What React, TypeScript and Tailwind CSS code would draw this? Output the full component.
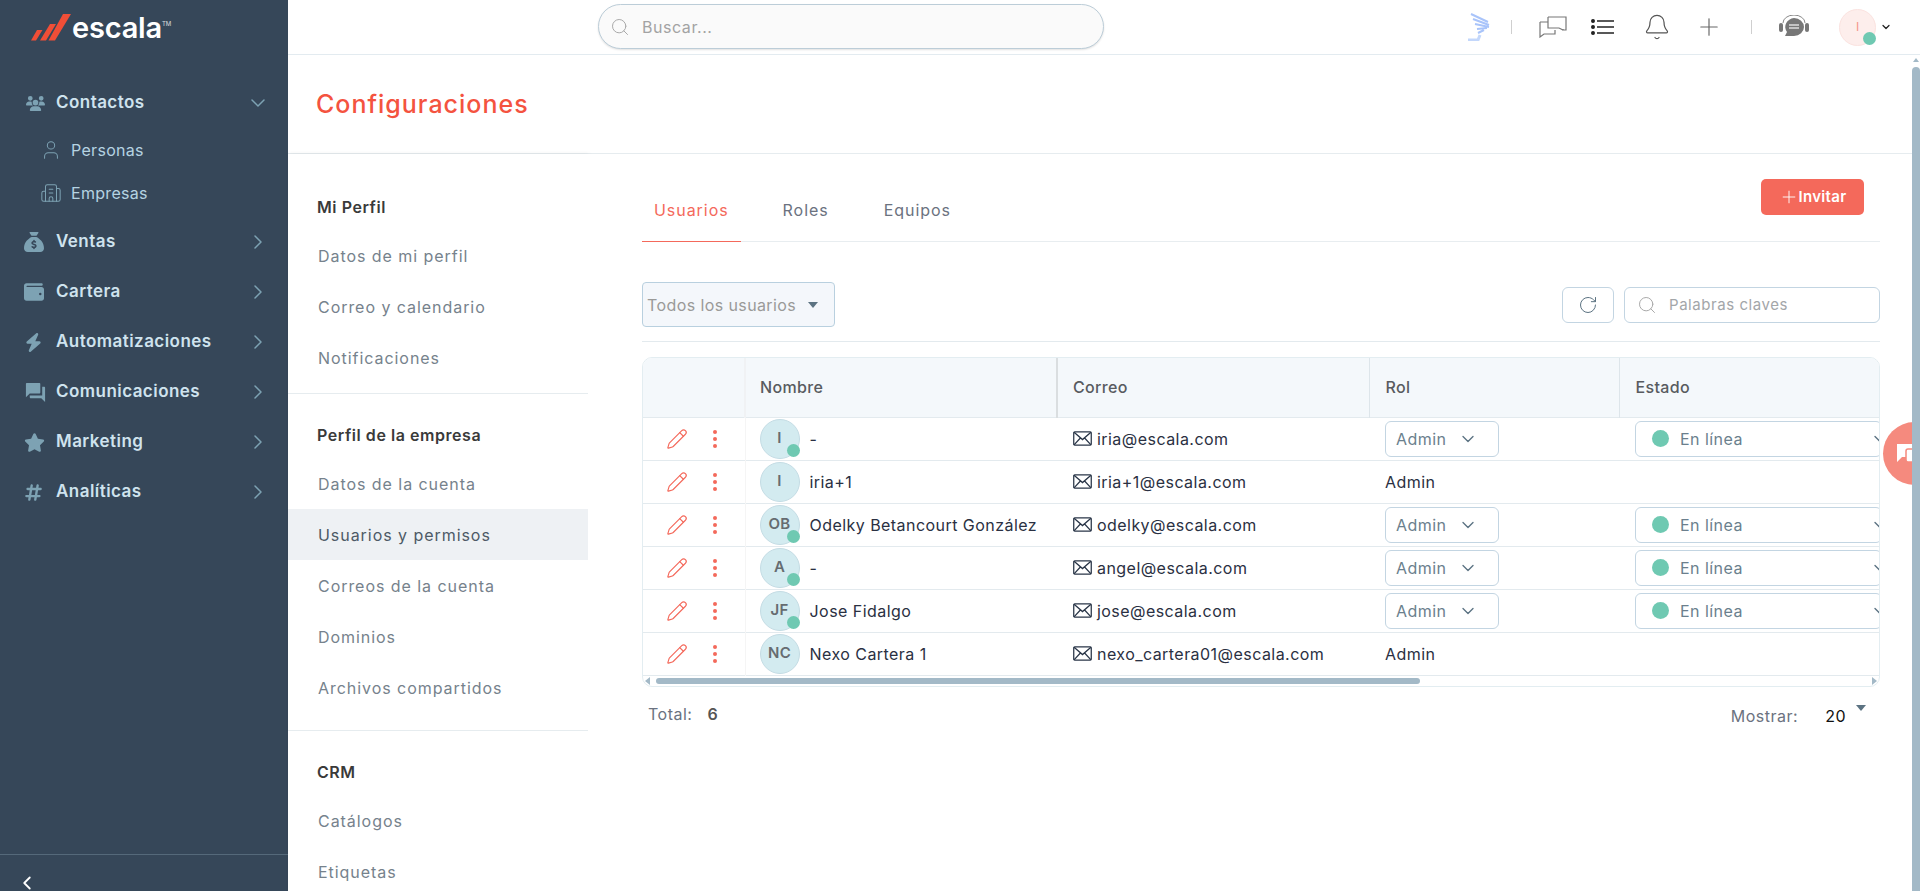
import { ChevronDown, ChevronLeft, ChevronRight, Plus, Search, RotateCw, Pencil, User, Building2, Bell } from "lucide-react";
import { FaBolt, FaHashtag, FaStar, FaUsers, FaWallet, FaSackDollar } from "react-icons/fa6";
import { MdForum } from "react-icons/md";

const nav = [
  { label: "Ventas", icon: <FaSackDollar className="w-[20px] h-[20px]" /> },
  { label: "Cartera", icon: <FaWallet className="w-[20px] h-[20px]" /> },
  { label: "Automatizaciones", icon: <FaBolt className="w-[19px] h-[19px]" /> },
  { label: "Comunicaciones", icon: <MdForum className="w-[23px] h-[23px]" /> },
  { label: "Marketing", icon: <FaStar className="w-[21px] h-[21px]" /> },
  { label: "Analíticas", icon: <FaHashtag className="w-[19px] h-[19px]" /> },
];

const settings = [
  { title: "Mi Perfil", items: ["Datos de mi perfil", "Correo y calendario", "Notificaciones"] },
  {
    title: "Perfil de la empresa",
    items: ["Datos de la cuenta", "Usuarios y permisos", "Correos de la cuenta", "Dominios", "Archivos compartidos"],
  },
  { title: "CRM", items: ["Catálogos", "Etiquetas"] },
];

const users = [
  { initials: "I", name: "-", mail: "iria@escala.com", online: true },
  { initials: "I", name: "iria+1", mail: "iria+1@escala.com", online: false },
  { initials: "OB", name: "Odelky Betancourt González", mail: "odelky@escala.com", online: true },
  { initials: "A", name: "-", mail: "angel@escala.com", online: true },
  { initials: "JF", name: "Jose Fidalgo", mail: "jose@escala.com", online: true },
  { initials: "NC", name: "Nexo Cartera 1", mail: "nexo_cartera01@escala.com", online: false },
];

function Logo() {
  return (
    <div className="flex items-center h-[54px] pl-[30px]">
      <svg width="41" height="27" viewBox="0 0 41 27" className="fill-[#f04e37]">
        <path d="M7 16h5.500L6 26.500H1z" />
        <path d="M20 10h6L16 26.500h-6z" />
        <path d="M33 0h8L25 26.500h-6.500z" />
      </svg>
      <span className="ml-[1px] text-[29px] leading-none font-semibold text-white tracking-[-0.2px]">escala</span>
      <span className="text-[6px] text-white/80 self-start mt-[19px]">TM</span>
    </div>
  );
}

function Sidebar() {
  return (
    <aside className="w-[288px] shrink-0 h-full bg-[#364759] flex flex-col">
      <Logo />
      <nav className="mt-[24px] flex-1">
        <div className="flex items-center h-[50px] pl-[26px] pr-[18px] text-[#cfe3ee]">
          <span className="w-[30px] text-[#7da2b3] flex"><FaUsers className="w-[19px] h-[19px]" /></span>
          <span className="text-[17px] font-semibold tracking-[0.45px]">Contactos</span>
          <ChevronDown className="ml-auto w-[24px] h-[24px] text-[#7da2b3]" strokeWidth={1.5} />
        </div>
        <div className="flex items-center h-[43px] pl-[40px] text-[#b5d3e2] text-[16px] tracking-[0.3px]">
          <User className="w-[22px] h-[22px] mr-[9px] text-[#7da2b3]" strokeWidth={1.1} />
          Personas
        </div>
        <div className="flex items-center h-[43px] pl-[40px] text-[#b5d3e2] text-[16px] tracking-[0.3px] mb-[3px]">
          <Building2 className="w-[22px] h-[22px] mr-[9px] text-[#7da2b3]" strokeWidth={1.1} />
          Empresas
        </div>
        {nav.map((n) => (
          <div key={n.label} className="flex items-center h-[50px] pl-[24px] pr-[18px] text-[#cfe3ee]">
            <span className="w-[32px] text-[#7da2b3] flex">{n.icon}</span>
            <span className="text-[17px] font-semibold tracking-[0.45px]">{n.label}</span>
            <ChevronRight className="ml-auto w-[24px] h-[24px] text-[#7da2b3]" strokeWidth={1.5} />
          </div>
        ))}
      </nav>
      <div className="h-[37px] border-t border-[#55697a] pl-[16px] pt-[15px] overflow-hidden">
        <ChevronLeft className="w-[22px] h-[26px] text-white" strokeWidth={2} />
      </div>
    </aside>
  );
}

function TopBar() {
  return (
    <header className="h-[55px] shrink-0 bg-white border-b border-[#e3ebf0] flex items-center pl-[310px] pr-[28px]">
      <div className="w-[506px] h-[45px] rounded-full border border-[#bccdd8] bg-[#fafafa] shadow-[0_1px_2px_rgba(0,0,0,0.12)] flex items-center pl-[11px] mt-[-1px]">
        <Search className="w-[20px] h-[20px] text-[#a9a9a9]" strokeWidth={1.2} />
        <span className="ml-[12px] text-[16px] text-[#a3a3a3] tracking-[0.55px]">Buscar...</span>
      </div>
      <div className="ml-auto flex items-center">
        <svg width="24" height="28" viewBox="0 0 24 28" className="fill-none stroke-[#a9c4fa]" strokeWidth="2">
          <path d="M4 1l17 8M6 6l16 6M8 11l14 3M10 16l10-1M11 20l6-3" />
          <path d="M1 27h10l2-5" className="stroke-[#c3d7fb]" strokeWidth="3" />
        </svg>
        <span className="ml-[20px] w-px h-[14px] bg-[#cfcfcf]" />
        <svg width="28" height="22" viewBox="0 0 28 22" className="ml-[27px] fill-none stroke-[#777]" strokeWidth="1.2">
          <path d="M9 1h18v13h-3v-1" />
          <path d="M9 1v11h11l4 2" />
          <path d="M1 6h8M1 6v15l4-3h11v-4" />
        </svg>
        <svg width="24" height="16" viewBox="0 0 24 16" className="ml-[24px] stroke-[#222] fill-[#222]" strokeWidth="1.6">
          <circle cx="2" cy="2" r="1.2" />
          <circle cx="2" cy="8" r="1.2" />
          <circle cx="2" cy="14" r="1.2" />
          <path d="M6 2h17M6 8h17M6 14h17" />
        </svg>
        <Bell className="ml-[28px] w-[28px] h-[28px] text-[#555]" strokeWidth={1.05} />
        <Plus className="ml-[24px] w-[28px] h-[28px] text-[#666]" strokeWidth={1} />
        <span className="ml-[28px] w-px h-[14px] bg-[#cfcfcf]" />
        <svg width="30" height="24" viewBox="0 0 30 24" className="ml-[27px]">
          <rect x="0" y="8" width="4" height="9" rx="2" className="fill-[#777]" />
          <rect x="26" y="8" width="4" height="9" rx="2" className="fill-[#777]" />
          <path d="M4 8a11 8 0 0 1 22 0" fill="none" stroke="#888" strokeWidth="1" />
          <path d="M15 3a10 9 0 0 1 0 18H6l2-4a10 9 0 0 1 7-14z" className="fill-[#777]" />
          <path d="M10 10h10M10 13h10" stroke="#ddd" strokeWidth="1.5" />
        </svg>
        <div className="relative ml-[30px] w-[37px] h-[37px] rounded-full bg-[#fdeeec] border border-[#fbe3e0] flex items-center justify-center text-[#f5928a] text-[12px]">
          I
          <span className="absolute right-[-1px] bottom-0 w-[13px] h-[13px] rounded-full bg-[#6fc9b2]" />
        </div>
        <ChevronDown className="ml-[4px] w-[12px] h-[12px] text-[#222]" strokeWidth={2.5} />
      </div>
    </header>
  );
}

function SettingsMenu() {
  return (
    <div className="w-[300px] shrink-0 h-full bg-white shadow-[1px_0_4px_rgba(0,0,0,0.08)] overflow-hidden pt-[29px] text-[16px] tracking-[0.95px]">
      {settings.map((s, i) => (
        <div
          key={s.title}
          className={i === 0 ? "border-b border-[#e6ecef] pb-[10px] mb-[17px]" : i === 1 ? "border-b border-[#e6ecef] pb-[17px] mb-[17px]" : ""}
        >
          <div className="h-[47px] flex items-center pl-[29px] font-semibold text-[#3a3a3a] tracking-[0.55px]">{s.title}</div>
          {s.items.map((item) => (
            <div
              key={item}
              className={
                item === "Usuarios y permisos"
                  ? "h-[51px] flex items-center pl-[30px] text-[#4d5a66] bg-[#eef1f4]"
                  : "h-[51px] flex items-center pl-[30px] text-[#76828c]"
              }
            >
              {item}
            </div>
          ))}
        </div>
      ))}
    </div>
  );
}

function MailIcon() {
  return (
    <svg width="19" height="15" viewBox="0 0 18 14" className="fill-none stroke-[#2a3648] shrink-0" strokeWidth="1.2">
      <rect x="0.7" y="0.7" width="16.6" height="12.6" rx="1" />
      <path d="M1 1l8 7 8-7M1 13l6-6.500M17 13l-6-6.500" />
    </svg>
  );
}

function UserRow({ u }: { u: (typeof users)[number] }) {
  return (
    <tr className="h-[43px] border-b border-[#e3eaee] text-[16px] text-[#2a3042] tracking-[0.45px]">
      <td className="p-0 border-r border-[#f5f5f5]">
        <div className="flex items-center pl-[23px]">
          <Pencil className="w-[22px] h-[22px] text-[#f4695b]" strokeWidth={1.25} />
          <svg width="4" height="20" viewBox="0 0 4 20" className="ml-[25px] fill-[#f4695b]">
            <circle cx="2" cy="3" r="2" />
            <circle cx="2" cy="10" r="2" />
            <circle cx="2" cy="17" r="2" />
          </svg>
        </div>
      </td>
      <td className="p-0 pl-[14px]">
        <div className="flex items-center">
          <div className="relative w-[40px] h-[40px] rounded-full bg-[#d3ebf0] border border-[#c4dce4] flex items-center justify-center text-[15px] font-semibold text-[#666c70] tracking-[0.3px]">
            {u.initials}
            {u.online && <span className="absolute right-[-1px] bottom-[1px] w-[13px] h-[13px] rounded-full bg-[#6fc9b2]" />}
          </div>
          <span className="ml-[10px]">{u.name}</span>
        </div>
      </td>
      <td className="p-0 pl-[16px]">
        <div className="flex items-center">
          <MailIcon />
          <span className="ml-[5px]">{u.mail}</span>
        </div>
      </td>
      <td className="p-0 pl-[16px]">
        {u.online ? (
          <div className="w-[114px] h-[36px] rounded-[6px] border border-[#c3d5e2] flex items-center pl-[10px] text-[#6b7f8d]">
            Admin
            <ChevronDown className="ml-[12px] w-[20px] h-[20px] text-[#5b7282]" strokeWidth={1.6} />
          </div>
        ) : (
          "Admin"
        )}
      </td>
      <td className="p-0 pl-[16px]">
        {u.online && (
          <div className="w-[247px] h-[36px] rounded-[6px] border border-[#c3d5e2] flex items-center pl-[16px] text-[#6b7f8d]">
            <span className="w-[17px] h-[17px] rounded-full bg-[#6fc9b2] mr-[11px]" />
            En línea
            <ChevronDown className="ml-auto mr-[-9px] w-[20px] h-[20px] text-[#5b7282]" strokeWidth={1.6} />
          </div>
        )}
      </td>
    </tr>
  );
}

function UsersPanel() {
  return (
    <div className="flex-1 min-w-0 h-full bg-white pl-[54px] pr-[40px] pt-[21px] overflow-hidden">
      <div className="flex items-start h-[67px] border-b border-[#e8edf0] text-[16px] tracking-[0.95px]">
        <div className="h-[52px] mt-[15px] pt-[8px] px-[12px] text-[#f4695b] border-b border-[#f4695b]">Usuarios</div>
        <div className="h-[52px] mt-[15px] pt-[8px] ml-[30px] px-[12px] text-[#6b7280]">Roles</div>
        <div className="h-[52px] mt-[15px] pt-[8px] ml-[31px] px-[12px] text-[#6b7280]">Equipos</div>
        <button className="ml-auto mr-[16px] mt-[4px] w-[103px] h-[36px] rounded-[5px] bg-[#f4695b] text-white text-[15px] font-semibold flex items-center justify-center tracking-[0.3px]">
          <Plus className="w-[20px] h-[20px]" strokeWidth={1.1} />
          Invitar
        </button>
      </div>
      <div className="h-[99px] flex items-start">
        <div className="mt-[40px] w-[193px] h-[45px] rounded-[4px] border border-[#b9d0df] bg-[#f4f7fb] flex items-center pl-[4px] text-[16px] text-[#9a9a98] tracking-[0.4px]">
          Todos los usuarios
          <span className="ml-[12px] w-0 h-0 border-x-[5px] border-x-transparent border-t-[6px] border-t-[#5c7382]" />
        </div>
        <button className="ml-auto mt-[45px] w-[52px] h-[36px] rounded-[6px] border border-[#c3d5e2] flex items-center justify-center">
          <RotateCw className="w-[20px] h-[20px] text-[#5c7382]" strokeWidth={1.2} />
        </button>
        <div className="ml-[10px] mt-[45px] w-[256px] h-[36px] rounded-[6px] border border-[#c3d5e2] flex items-center pl-[12px] text-[15px] text-[#a3a6a9] tracking-[0.55px]">
          <Search className="w-[20px] h-[20px] text-[#a9a9a9]" strokeWidth={1.2} />
          <span className="ml-[12px]">Palabras claves</span>
        </div>
      </div>
      <div className="border-t border-[#e3eaee] pt-[15px]">
        <div className="rounded-[10px] border border-[#e3edf1] overflow-hidden">
          <table className="table-fixed w-[1300px] border-collapse text-left">
            <colgroup>
              <col className="w-[102px]" />
              <col className="w-[312px]" />
              <col className="w-[312px]" />
              <col className="w-[250px]" />
              <col className="w-[324px]" />
            </colgroup>
            <thead>
              <tr className="h-[59px] bg-[#f4f8fb] border-b border-[#e3eaee] text-[16px] text-[#585b5f] tracking-[0.35px]">
                <th className="p-0 font-medium border-r-2 border-[#f0f2f4]" />
                <th className="p-0 pl-[14px] font-medium border-r-2 border-[#dadee0]">Nombre</th>
                <th className="p-0 pl-[15px] font-medium border-r border-[#dde5ea]">Correo</th>
                <th className="p-0 pl-[16px] font-medium border-r border-[#dde5ea]">Rol</th>
                <th className="p-0 pl-[16px] font-medium">Estado</th>
              </tr>
            </thead>
            <tbody>
              {users.map((u) => (
                <UserRow key={u.mail} u={u} />
              ))}
            </tbody>
          </table>
          <div className="h-[10px] flex items-center px-[2px] gap-[3px]">
            <span className="w-0 h-0 border-y-[4px] border-y-transparent border-r-[5px] border-r-[#a3b9c7]" />
            <div className="ml-[3px] w-[764px] h-[6px] rounded-full bg-[#a3b9c7]" />
            <span className="ml-auto w-0 h-0 border-y-[4px] border-y-transparent border-l-[5px] border-l-[#a3b9c7]" />
          </div>
        </div>
      </div>
      <div className="flex items-start pt-[15px] text-[16px] tracking-[0.5px]">
        <span className="ml-[6px] text-[#6b7280]">Total:</span>
        <span className="ml-[15px] font-semibold text-[#555]">6</span>
        <span className="ml-auto text-[#6b7280] mt-[2px]">Mostrar:</span>
        <span className="ml-[27px] text-[#111] mt-[2px]">20</span>
        <span className="ml-[10px] mr-[14px] mt-[3px] w-0 h-0 border-x-[5px] border-x-transparent border-t-[6px] border-t-[#5c7382]" />
      </div>
    </div>
  );
}

export default function App() {
  return (
    <div className="relative flex h-[891px] w-full overflow-hidden font-['Inter',sans-serif] bg-white">
      <Sidebar />
      <div className="flex-1 min-w-0 flex flex-col">
        <TopBar />
        <div className="h-[99px] shrink-0 border-b border-[#e6ecef] flex items-center pl-[28px] pt-[2px] text-[25px] font-medium text-[#f4533f] tracking-[1px]">
          Configuraciones
        </div>
        <div className="flex-1 min-h-0 flex">
          <SettingsMenu />
          <UsersPanel />
        </div>
      </div>
      {/* floating chat bubble and page scrollbar sit over the content */}
      <div className="absolute left-[1883px] top-[422px] w-[63px] h-[63px] rounded-full bg-[#f58a7e] flex items-center pl-[14px]">
        <svg width="26" height="22" viewBox="0 0 26 22" className="fill-white">
          <path d="M0 1h17v13H5l-5 5z" />
          <rect x="9" y="6" width="16" height="13" rx="2" stroke="#f58a7e" strokeWidth="1.5" />
        </svg>
      </div>
      <div className="absolute right-0 top-[55px] w-[8px] bottom-0 flex flex-col items-center">
        <span className="mt-[3px] w-0 h-0 border-x-[3px] border-x-transparent border-b-[4px] border-b-[#a3b9c7]" />
        <div className="mt-[5px] flex-1 w-full rounded-t-full bg-[#a3b9c7]" />
      </div>
    </div>
  );
}
